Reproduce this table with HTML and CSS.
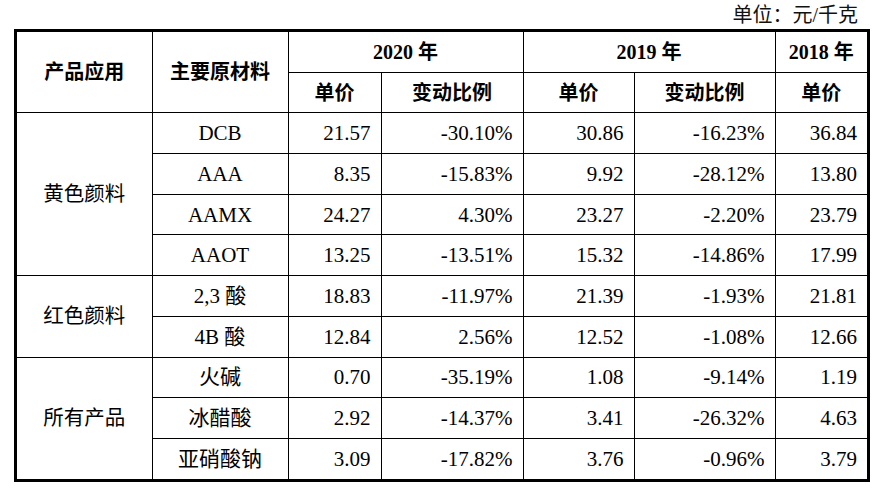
FILE: index.html
```html
<!DOCTYPE html>
<html lang="zh">
<head>
<meta charset="utf-8">
<link rel="stylesheet" href="styles.css">
</head>
<body>
<div class="unit">单位：元/千克</div>
<div class="frame">
<table class="grid">
<colgroup>
<col class="c1"><col class="c2"><col class="c3"><col class="c4"><col class="c5"><col class="c6"><col class="c7">
</colgroup>
<thead>
<tr>
<th rowspan="2">产品应用</th>
<th rowspan="2">主要原材料</th>
<th colspan="2">2020 年</th>
<th colspan="2">2019 年</th>
<th>2018 年</th>
</tr>
<tr>
<th>单价</th><th>变动比例</th><th>单价</th><th>变动比例</th><th>单价</th>
</tr>
</thead>
<tbody>
<tr><td rowspan="4" class="grp">黄色颜料</td><td class="mat">DCB</td><td>21.57</td><td>-30.10%</td><td>30.86</td><td>-16.23%</td><td>36.84</td></tr>
<tr><td class="mat">AAA</td><td>8.35</td><td>-15.83%</td><td>9.92</td><td>-28.12%</td><td>13.80</td></tr>
<tr><td class="mat">AAMX</td><td>24.27</td><td>4.30%</td><td>23.27</td><td>-2.20%</td><td>23.79</td></tr>
<tr><td class="mat">AAOT</td><td>13.25</td><td>-13.51%</td><td>15.32</td><td>-14.86%</td><td>17.99</td></tr>
<tr><td rowspan="2" class="grp">红色颜料</td><td class="mat">2,3 酸</td><td>18.83</td><td>-11.97%</td><td>21.39</td><td>-1.93%</td><td>21.81</td></tr>
<tr><td class="mat">4B 酸</td><td>12.84</td><td>2.56%</td><td>12.52</td><td>-1.08%</td><td>12.66</td></tr>
<tr><td rowspan="3" class="grp">所有产品</td><td class="mat">火碱</td><td>0.70</td><td>-35.19%</td><td>1.08</td><td>-9.14%</td><td>1.19</td></tr>
<tr><td class="mat">冰醋酸</td><td>2.92</td><td>-14.37%</td><td>3.41</td><td>-26.32%</td><td>4.63</td></tr>
<tr><td class="mat">亚硝酸钠</td><td>3.09</td><td>-17.82%</td><td>3.76</td><td>-0.96%</td><td>3.79</td></tr>
</tbody>
</table>
</div>
</body>
</html>
```
FILE: styles.css
```css
html, body {
  margin: 0;
  padding: 0;
  background: #fff;
}
body {
  font-family: "Liberation Serif", "Noto Sans CJK SC", serif;
  color: #000;
  width: 880px;
  height: 492px;
  overflow: hidden;
}
.unit {
  height: 29px;
  box-sizing: border-box;
  padding-top: 3px;
  padding-right: 22px;
  text-align: right;
  font-size: 20px;
  line-height: 24px;
  color: #111;
}
.frame {
  margin-left: 14px;
  width: 850px;
  border: 3px solid #000;
}
.grid {
  width: 850px;
  border-collapse: collapse;
  border-style: hidden;
  table-layout: fixed;
}
.c1 { width: 135px; }
.c2 { width: 136px; }
.c3 { width: 93px; }
.c4 { width: 142px; }
.c5 { width: 111px; }
.c6 { width: 141px; }
.c7 { width: 92px; }
.grid th, .grid td {
  border: 1px solid #000;
  height: 39.7px;
  padding: 0 10px 0 0;
  font-size: 21px;
  line-height: 24px;
  text-align: right;
  vertical-align: middle;
}
.grid th {
  font-weight: bold;
  font-size: 20px;
  text-align: center;
  padding: 0;
}
.grid td.mat, .grid td.grp {
  text-align: center;
  padding: 0;
}
.grid td.grp {
  font-size: 20.5px;
}
```
